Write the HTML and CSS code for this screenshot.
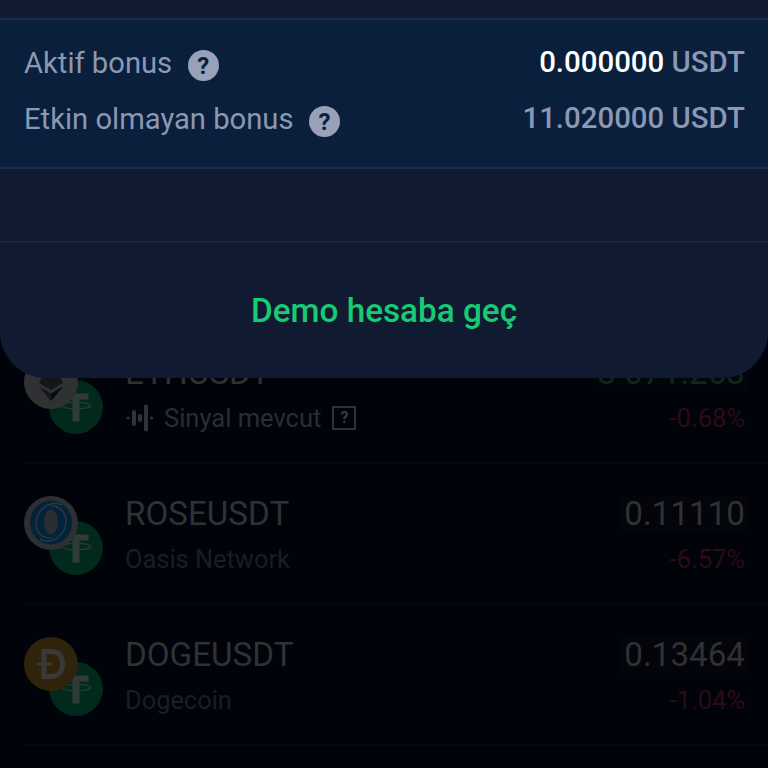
FILE: index.html
```html
<!DOCTYPE html>
<html lang="tr">
<head>
<meta charset="utf-8">
<title>Bonus</title>
<link rel="stylesheet" href="styles.css">
</head>
<body>
<svg class="defs" width="0" height="0">
  <symbol id="tether" viewBox="0 0 54 54">
    <circle cx="27" cy="27" r="27" fill="#012a1c"/>
    <path d="M14 13.500H39.500V19.500H30.500V41.500H23.500V19.500H14Z" fill="#303a3a"/>
    <ellipse cx="27" cy="25.500" rx="14.500" ry="3.200" fill="none" stroke="#293b36" stroke-width="1.300"/>
  </symbol>
</svg>
<main class="list">
  <article class="pair">
    <div class="coins">
      <svg class="coin quote"><use href="#tether"/></svg>
      <svg class="coin base" viewBox="0 0 54 54">
        <circle cx="27" cy="27" r="27" fill="#303133"/>
        <path d="M27 4L39 28L27 35L15 28Z" fill="#14161a"/>
        <path d="M15 31.500L27 38.500L39 31.500L27 46Z" fill="#15171a"/>
        <path d="M27 38.500L39 31.500L27 46Z" fill="#080b10"/>
      </svg>
    </div>
    <div class="names">
      <div class="symbol eth">ETHUSDT</div>
      <div class="signal">
        <svg class="wave" width="28" height="28" viewBox="0 0 28 28" fill="none" stroke="#303238" stroke-linecap="round">
          <path d="M3 14H3.100M26.500 14H26.600" stroke-width="3"/>
          <path d="M9 8V20M15 12V16M21 2.500V25.500" stroke-width="4"/>
        </svg>
        <span class="signal-text">Sinyal mevcut</span>
        <span class="hint">?</span>
      </div>
    </div>
    <div class="prices">
      <div class="price up">3 071.263</div>
      <div class="change">-0.68%</div>
    </div>
  </article>
  <article class="pair">
    <div class="coins">
      <svg class="coin quote"><use href="#tether"/></svg>
      <svg class="coin base" viewBox="0 0 54 54">
        <circle cx="27" cy="27" r="27" fill="#2d2f33"/>
        <ellipse cx="27" cy="26.500" rx="21" ry="22" fill="#03233a"/>
        <ellipse cx="27" cy="26" rx="7" ry="12.500" fill="#2b2d30"/>
        <path d="M38 9C26 3 12 14 12 28C12 37 19 43 28 42M16 43C28 50 42 39 42 25C42 16 35 10 27 10" fill="none" stroke="#2a3740" stroke-width="1.500"/>
      </svg>
    </div>
    <div class="names">
      <div class="symbol rose">ROSEUSDT</div>
      <div class="label oasis">Oasis Network</div>
    </div>
    <div class="prices">
      <div class="price">0.11110</div>
      <div class="change">-6.57%</div>
    </div>
  </article>
  <article class="pair">
    <div class="coins">
      <svg class="coin quote"><use href="#tether"/></svg>
      <svg class="coin base" viewBox="0 0 54 54">
        <circle cx="27" cy="27" r="27" fill="#30230b"/>
        <path d="M20 14.500H26C35 14.500 38.500 19 38.500 27C38.500 35 34 39.500 26 39.500H20Z" fill="none" stroke="#393936" stroke-width="5"/>
        <path d="M13 27H28" stroke="#393936" stroke-width="3"/>
      </svg>
    </div>
    <div class="names">
      <div class="symbol doge">DOGEUSDT</div>
      <div class="label dogecoin">Dogecoin</div>
    </div>
    <div class="prices">
      <div class="price">0.13464</div>
      <div class="change">-1.04%</div>
    </div>
  </article>
</main>
<section class="sheet">
  <div class="bonus">
    <div class="row">
      <span class="caption">Aktif bonus</span>
      <span class="help">?</span>
      <span class="amount"><b>0.000000</b> USDT</span>
    </div>
    <div class="row">
      <span class="caption">Etkin olmayan bonus</span>
      <span class="help">?</span>
      <span class="amount">11.020000 USDT</span>
    </div>
  </div>
  <div class="spacer"></div>
  <button class="demo">Demo hesaba geç</button>
</section>
</body>
</html>
```
FILE: styles.css
```css
* { box-sizing: border-box; }
body {
  margin: 0;
  height: 768px;
  overflow: hidden;
  background: #01030b;
  font-family: Roboto, "Liberation Sans", sans-serif;
  position: relative;
}
.defs { position: absolute; }

.list { padding: 323px 0 0 24px; }
.pair {
  height: 141px;
  border-bottom: 2px solid #04070f;
  display: grid;
  grid-template-columns: 80px 1fr auto;
  column-gap: 21px;
  padding: 32px 19px 0 0;
}
.coins { position: relative; width: 80px; height: 80px; }
.coin { position: absolute; width: 54px; height: 54px; }
.quote { left: 25px; top: 25px; }
.base { left: 0; top: 0; }

.names, .prices { display: flex; flex-direction: column; }
.symbol {
  height: 36px;
  line-height: 35px;
  font-size: 33.200px;
  color: #303135;
  white-space: nowrap;
}
.label {
  margin-top: 13px;
  line-height: 28px;
  font-size: 25.400px;
  color: #1b1d22;
}
.signal {
  display: flex;
  align-items: center;
  height: 30px;
  margin-top: 12px;
}
.signal-text {
  margin-left: 11px;
  font-size: 25.500px;
  line-height: 30px;
  color: #2a2c32;
}
.hint {
  width: 24px;
  height: 24px;
  margin-left: 11px;
  border: 2px solid #303238;
  color: #383a40;
  font-size: 16px;
  font-weight: 700;
  line-height: 20px;
  text-align: center;
}
.prices { align-items: flex-end; }
.price {
  height: 36px;
  padding: 0 4px;
  background: #03050b;
  color: #303135;
  font-size: 33.200px;
  line-height: 35px;
}
.price.up { color: #12271c; background: #01060b; }
.change {
  margin: 13px 4px 0 0;
  font-size: 25.500px;
  line-height: 28px;
  color: #2c0b13;
}

.sheet {
  position: absolute;
  top: 0;
  left: 0;
  width: 768px;
  height: 378px;
  padding-top: 18px;
  border-radius: 0 0 46px 46px;
  background: #101a31;
  overflow: hidden;
}
.bonus {
  height: 151px;
  padding: 17px 23px 0 24px;
  background: #091f3b;
  border-top: 2px solid #1b2e49;
  border-bottom: 2px solid #1b2e49;
}
.row { display: flex; align-items: center; height: 56px; color: #8c98b3; }
.caption { font-size: 29.200px; line-height: 34px; padding-bottom: 4px; }
.help {
  width: 31px;
  height: 31px;
  margin: 1px 0 0 15.500px;
  border-radius: 50%;
  background: #98a1b9;
  color: #091f3b;
  font-size: 24px;
  font-weight: 700;
  line-height: 32px;
  text-align: center;
}
.amount {
  margin-left: auto;
  padding-bottom: 6px;
  font-size: 29.400px;
  line-height: 34px;
  font-weight: 500;
}
.amount b { color: #fff; font-weight: 500; }
.spacer { height: 74px; border-bottom: 2px solid #1a2740; }
.demo {
  display: block;
  width: 100%;
  height: 136px;
  padding: 0;
  border: 0;
  background: none;
  color: #17cb72;
  font: 500 33.300px/40px Roboto, "Liberation Sans", sans-serif;
}
```
